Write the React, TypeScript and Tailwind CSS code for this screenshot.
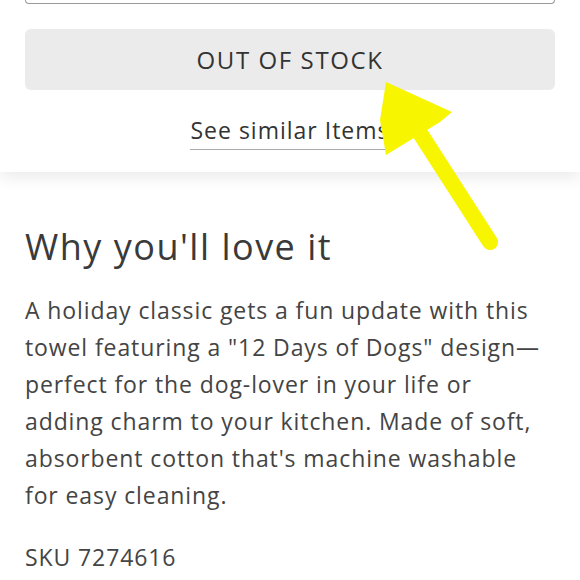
import React from 'react';

function YellowArrow() {
  return (
    <svg className="absolute left-0 top-0 z-20 pointer-events-none" width="580" height="580" viewBox="0 0 580 580">
      <polygon points="386,82 452,112 440,122 386,155 380,120" fill="#f7f500" />
      <path d="M418 130 L490 242" stroke="#f7f500" strokeWidth="16" strokeLinecap="round" fill="none" />
    </svg>
  );
}

export default function App() {
  return (
    <div className="relative w-[580px] h-[580px] overflow-hidden bg-white text-[#333333]" style={{ fontFamily: '"Open Sans", "Noto Sans", sans-serif' }}>
      <div className="relative z-10 bg-white px-[25px] pb-[22px] shadow-[0_6px_14px_rgba(0,0,0,0.08)]">
        <div className="h-[4px] border-x border-b border-[#999999] rounded-b-[4px]" />
        <button className="mt-[25px] w-full h-[61px] rounded-[6px] bg-[#ebebeb] text-[24px] tracking-[1.6px] text-[#333333]">
          OUT OF STOCK
        </button>
        <div className="flex justify-center mt-[26px]">
          <span className="text-[23px] leading-[28px] tracking-[1px] border-b border-[#aaaaaa] pb-[5px]">See similar Items</span>
        </div>
      </div>
      <div className="px-[25px] pt-[52px]">
        <h2 className="text-[36px] leading-[46px] font-medium tracking-[1.5px] text-[#3a3a3a]">Why you'll love it</h2>
        <p className="mt-[22px] text-[23px] leading-[37px] tracking-[0.9px] text-[#444444]">
          A holiday classic gets a fun update with this towel featuring a "12 Days of Dogs" design—perfect for the dog-lover in your life or adding charm to your kitchen. Made of soft, absorbent cotton that's machine washable for easy cleaning.
        </p>
        <p className="mt-[25px] text-[23px] leading-[37px] tracking-[0.9px] text-[#444444]">SKU 7274616</p>
      </div>
      <YellowArrow />
    </div>
  );
}
